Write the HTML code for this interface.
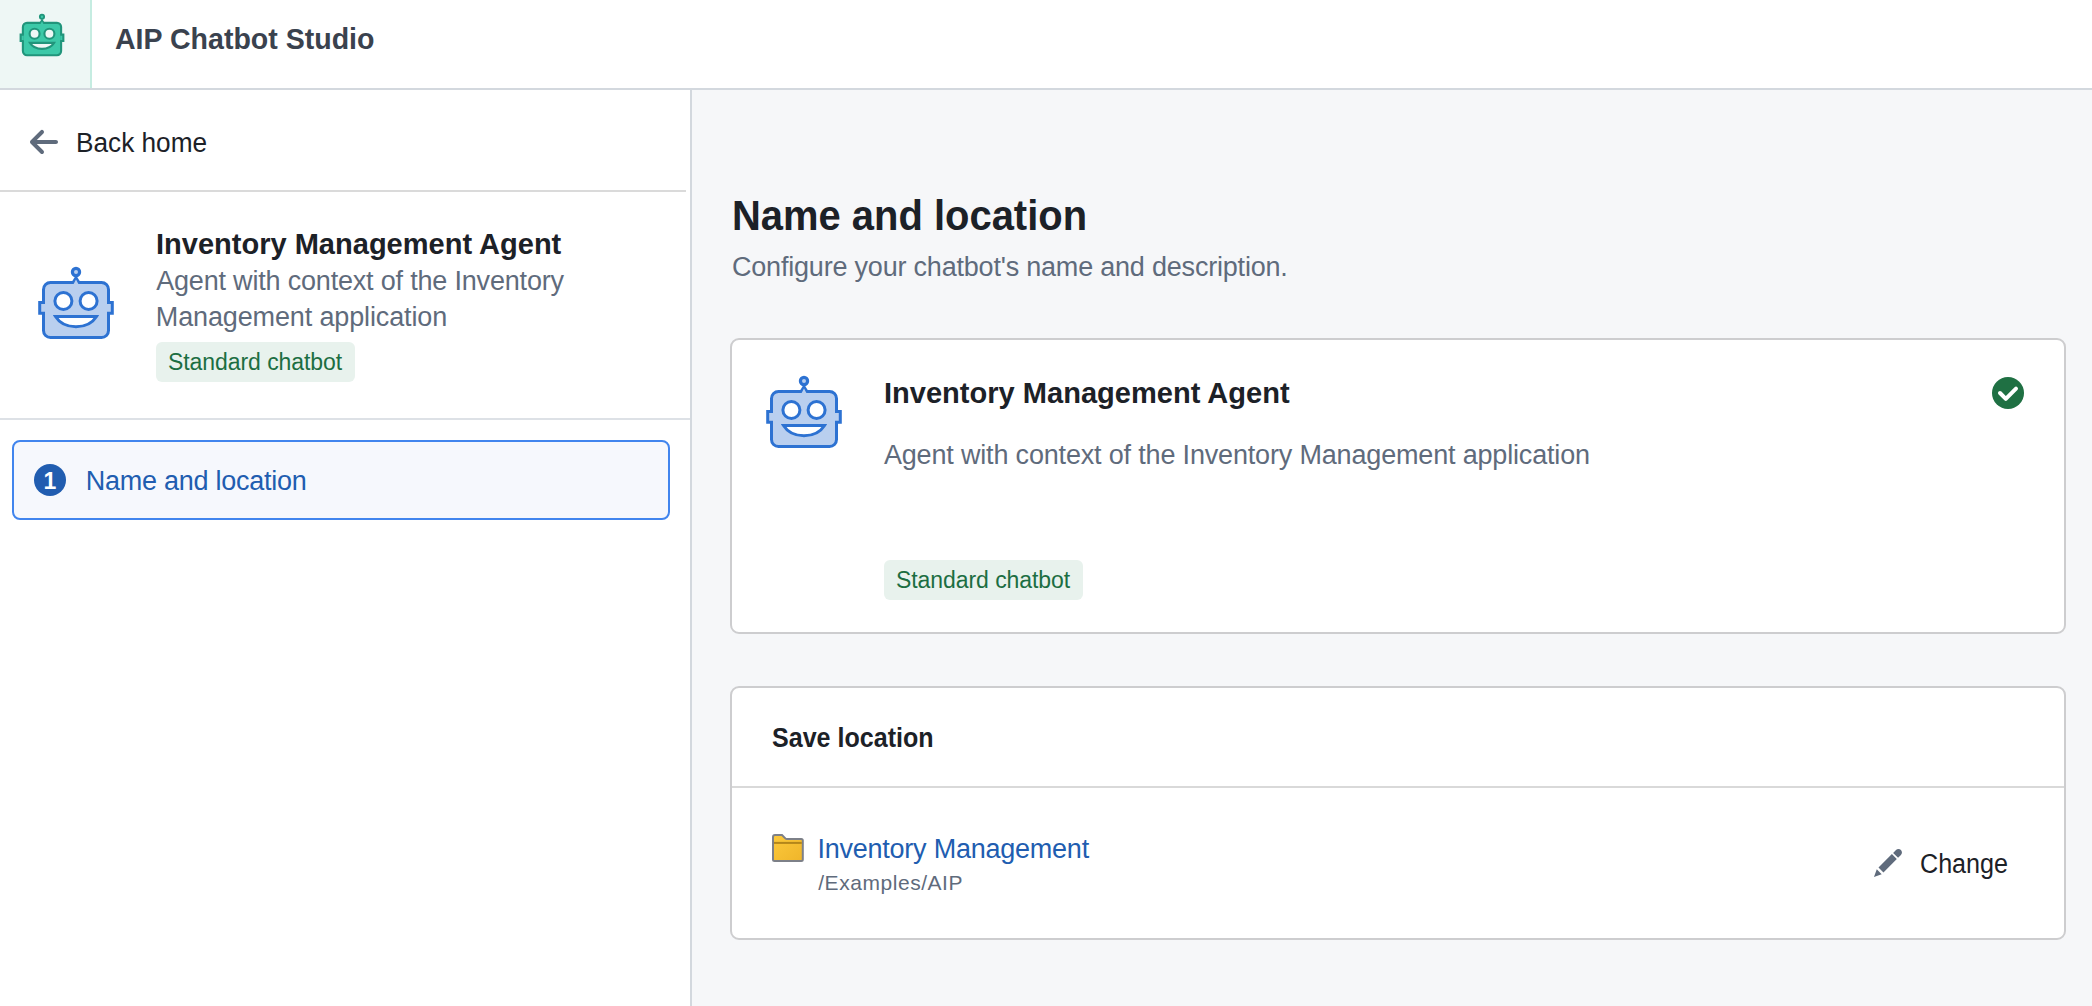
<!DOCTYPE html>
<html>
<head>
<meta charset="utf-8">
<style>
html,body{margin:0;padding:0;}
body{width:2092px;height:1006px;position:relative;overflow:hidden;background:#f6f7f9;font-family:"Liberation Sans",sans-serif;}
.a{position:absolute;}
.t{position:absolute;white-space:nowrap;line-height:1;font-family:"Liberation Sans",sans-serif;}
svg{position:absolute;overflow:visible;}
</style>
</head>
<body>
<!-- header -->
<div class="a" style="left:0;top:0;width:2092px;height:88px;background:#fff;border-bottom:2px solid #d3d8de;"></div>
<div class="a" style="left:0;top:0;width:90px;height:88px;background:#eef7f5;border-right:2px solid #c5ece1;"></div>
<svg style="left:0;top:0" width="92" height="88" viewBox="0 0 92 88">
  <g transform="translate(22 22) scale(0.588)">
    <g stroke="#21957b" stroke-width="3.6" fill="#3cc9a8">
      <circle cx="34" cy="-9" r="3.6" stroke-width="3.2"/>
      <rect x="1.5" y="1.5" width="65" height="55" rx="7"/>
      <path d="M3 21.5H-2.3V32.2H3"/>
      <path d="M65 21.5H70.3V32.2H65"/>
    </g>
    <polygon points="28.5,3 34,-6 39.5,3" fill="#21957b"/>
    <polygon points="31.5,3.3 34,-1.4 36.5,3.3" fill="#3cc9a8"/>
    <g stroke="#21957b" stroke-width="3.6" fill="#eef7f5">
      <circle cx="21.4" cy="20" r="8.5"/>
      <circle cx="46.6" cy="20" r="8.5"/>
      <path d="M13.5 35.5H54.5C50.5 42 43 45.7 34 45.7C25 45.7 17.5 42 13.5 35.5Z"/>
    </g>
  </g>
</svg>
<div class="t" style="left:115px;top:23.7px;font-size:30px;font-weight:700;transform-origin:0 0;transform:scaleX(0.9513);color:#3a424e;">AIP Chatbot Studio</div>

<!-- sidebar -->
<div class="a" style="left:0;top:90px;width:690px;height:916px;background:#fff;border-right:2px solid #d3d8de;"></div>
<svg style="left:28px;top:126px" width="32" height="32" viewBox="0 0 16 16"><path fill="#5f6b7c" d="M13.99 6.99H4.41L7.7 3.7a1.003 1.003 0 00-1.42-1.42l-5 5c-.18.18-.29.43-.29.71 0 .28.11.53.29.71l5 5a1.003 1.003 0 001.42-1.42L4.41 8.99H14c.55 0 1-.45 1-1s-.46-1-1.01-1z"/></svg>
<div class="t" style="left:75.8px;top:129.8px;font-size:27px;transform-origin:0 0;transform:scaleX(0.9705);color:#1c2127;">Back home</div>
<div class="a" style="left:0;top:190px;width:686px;height:2px;background:#dadada;"></div>

<svg style="left:36px;top:265px" width="80" height="76" viewBox="-6 -16 80 76">
  <g stroke="#2d72d2" stroke-width="3" fill="#b9cfef">
      <circle cx="34" cy="-9" r="3.6" stroke-width="3.2"/>
      <rect x="1.5" y="1.5" width="65" height="55" rx="7"/>
      <path d="M3 21.5H-2.3V32.2H3"/>
      <path d="M65 21.5H70.3V32.2H65"/>
    </g>
    <polygon points="28.5,3 34,-6 39.5,3" fill="#2d72d2"/>
    <polygon points="31.5,3.3 34,-1.4 36.5,3.3" fill="#b9cfef"/>
    <g stroke="#2d72d2" stroke-width="3" fill="#fff">
      <circle cx="21.4" cy="20" r="8.5"/>
      <circle cx="46.6" cy="20" r="8.5"/>
      <path d="M13.5 35.5H54.5C50.5 42 43 45.7 34 45.7C25 45.7 17.5 42 13.5 35.5Z"/>
    </g>
</svg>
<div class="t" style="left:156.2px;top:229px;font-size:30px;font-weight:700;transform-origin:0 0;transform:scaleX(0.9674);color:#1c2127;">Inventory Management Agent</div>
<div class="t" style="left:156.2px;top:268px;font-size:27px;letter-spacing:-0.188px;color:#5f6b7c;">Agent with context of the Inventory</div>
<div class="t" style="left:155.8px;top:303.8px;font-size:27px;letter-spacing:-0.133px;color:#5f6b7c;">Management application</div>
<div class="a" style="left:156px;top:342px;width:199px;height:40px;border-radius:6px;background:#e8f2ed;"></div>
<div class="t" style="left:168px;top:351px;font-size:23px;letter-spacing:-0.067px;color:#1c6e42;">Standard chatbot</div>
<div class="a" style="left:0;top:418px;width:690px;height:2px;background:#dde1e6;"></div>

<div class="a" style="left:12px;top:440px;width:654px;height:76px;border:2px solid #4185ee;border-radius:8px;background:#f6f8fd;"></div>
<div class="a" style="left:34px;top:464px;width:32px;height:32px;border-radius:50%;background:#215db0;"></div>
<div class="t" style="left:34px;top:469.5px;width:32px;text-align:center;font-size:23px;font-weight:700;color:#fff;">1</div>
<div class="t" style="left:85.8px;top:468px;font-size:27px;letter-spacing:-0.263px;color:#215db0;">Name and location</div>

<!-- main -->
<div class="t" style="left:731.5px;top:194px;font-size:43px;font-weight:700;transform-origin:0 0;transform:scaleX(0.9287);color:#1c2127;">Name and location</div>
<div class="t" style="left:732px;top:253.8px;font-size:27px;letter-spacing:-0.204px;color:#5f6b7c;">Configure your chatbot's name and description.</div>

<!-- card 1 -->
<div class="a" style="left:730px;top:338px;width:1332px;height:292px;border:2px solid #cdcdcf;border-radius:9px;background:#fff;"></div>
<svg style="left:764px;top:374px" width="80" height="76" viewBox="-6 -16 80 76">
  <g stroke="#2d72d2" stroke-width="3" fill="#b9cfef">
      <circle cx="34" cy="-9" r="3.6" stroke-width="3.2"/>
      <rect x="1.5" y="1.5" width="65" height="55" rx="7"/>
      <path d="M3 21.5H-2.3V32.2H3"/>
      <path d="M65 21.5H70.3V32.2H65"/>
    </g>
    <polygon points="28.5,3 34,-6 39.5,3" fill="#2d72d2"/>
    <polygon points="31.5,3.3 34,-1.4 36.5,3.3" fill="#b9cfef"/>
    <g stroke="#2d72d2" stroke-width="3" fill="#fff">
      <circle cx="21.4" cy="20" r="8.5"/>
      <circle cx="46.6" cy="20" r="8.5"/>
      <path d="M13.5 35.5H54.5C50.5 42 43 45.7 34 45.7C25 45.7 17.5 42 13.5 35.5Z"/>
    </g>
</svg>
<div class="t" style="left:884.4px;top:378px;font-size:30px;font-weight:700;transform-origin:0 0;transform:scaleX(0.9681);color:#1c2127;">Inventory Management Agent</div>
<div class="t" style="left:883.9px;top:441.8px;font-size:27px;letter-spacing:-0.172px;color:#5f6b7c;">Agent with context of the Inventory Management application</div>
<div class="a" style="left:884px;top:560px;width:199px;height:40px;border-radius:6px;background:#e8f2ed;"></div>
<div class="t" style="left:896px;top:568.7px;font-size:23px;letter-spacing:-0.067px;color:#1c6e42;">Standard chatbot</div>
<svg style="left:1992px;top:377px" width="32" height="32" viewBox="1992 377 32 32">
  <circle cx="2008" cy="393" r="16" fill="#1f7043"/>
  <polyline points="2000,393 2005.8,398.8 2016,388.6" fill="none" stroke="#fff" stroke-width="4" stroke-linecap="round" stroke-linejoin="round"/>
</svg>

<!-- card 2 -->
<div class="a" style="left:730px;top:686px;width:1332px;height:250px;border:2px solid #cdcdcf;border-radius:9px;background:#fff;"></div>
<div class="a" style="left:732px;top:786px;width:1332px;height:2px;background:#d9d9d9;"></div>
<div class="t" style="left:772.2px;top:724.8px;font-size:27px;font-weight:700;transform-origin:0 0;transform:scaleX(0.9281);color:#1c2127;">Save location</div>
<svg style="left:772px;top:834px" width="32" height="28" viewBox="0 0 32 28">
  <defs><linearGradient id="fg" x1="0" y1="0" x2="1" y2="1"><stop offset="0" stop-color="#fcc93c"/><stop offset="1" stop-color="#efb52a"/></linearGradient></defs>
  <path d="M1 3Q1 1 3 1H10L13.6 4.6Q14.1 5.1 14.8 5.1H29.3Q30.8 5.1 30.8 6.6V25.5Q30.8 27 29.3 27H2.5Q1 27 1 25.5Z" fill="url(#fg)" stroke="#7d8088" stroke-width="2"/>
  <rect x="2" y="7.9" width="27.8" height="2" fill="#b3861a"/>
</svg>
<div class="t" style="left:817.4px;top:835.8px;font-size:27px;letter-spacing:-0.232px;color:#215db0;">Inventory Management</div>
<div class="t" style="left:818.2px;top:872.3px;font-size:21px;letter-spacing:0.55px;color:#5f6b7c;">/Examples/AIP</div>
<svg style="left:1872px;top:847px" width="32" height="32" viewBox="0 0 16 16"><path fill="#5f6b7c" d="M3.25 10.26l2.47 2.47 6.69-6.69-2.46-2.48-6.7 6.7zM.99 14.99l3.86-1.39-2.46-2.44-1.4 3.83zm12.25-14c-.48 0-.92.2-1.24.51l-1.44 1.44 2.47 2.47 1.44-1.44c.32-.32.51-.75.51-1.24.01-.95-.77-1.74-1.74-1.74z"/></svg>
<div class="t" style="left:1919.8px;top:850.6px;font-size:27px;transform-origin:0 0;transform:scaleX(0.9305);color:#1c2127;">Change</div>
</body>
</html>
